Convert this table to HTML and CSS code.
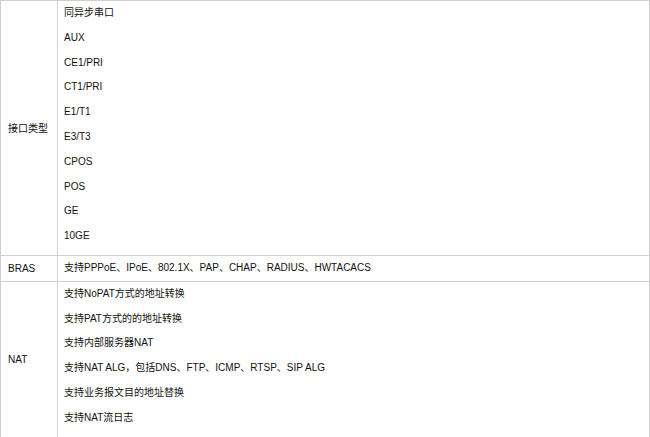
FILE: index.html
```html
<!DOCTYPE html>
<html lang="zh-CN">

<head>
  <meta charset="utf-8">
  <title>接口与特性</title>
  <link rel="stylesheet" href="styles.css">
</head>

<body>

  <table class="spec">
    <tr>
      <td class="spec-name">接口类型</td>
      <td class="spec-value">
        <div class="item">同异步串口</div>
        <div class="item">AUX</div>
        <div class="item">CE1/PRI</div>
        <div class="item">CT1/PRI</div>
        <div class="item">E1/T1</div>
        <div class="item">E3/T3</div>
        <div class="item">CPOS</div>
        <div class="item">POS</div>
        <div class="item">GE</div>
        <div class="item">10GE</div>
      </td>
    </tr>
    <tr>
      <td class="spec-name">BRAS</td>
      <td class="spec-value spec-single">
        <div class="item">支持PPPoE、IPoE、802.1X、PAP、CHAP、RADIUS、HWTACACS</div>
      </td>
    </tr>
    <tr>
      <td class="spec-name">NAT</td>
      <td class="spec-value">
        <div class="item">支持NoPAT方式的地址转换</div>
        <div class="item">支持PAT方式的的地址转换</div>
        <div class="item">支持内部服务器NAT</div>
        <div class="item">支持NAT ALG，包括DNS、FTP、ICMP、RTSP、SIP ALG</div>
        <div class="item">支持业务报文目的地址替换</div>
        <div class="item">支持NAT流日志</div>
      </td>
    </tr>
  </table>

</body>

</html>
```

FILE: styles.css
```css
body {
  margin: 0;
  background: #fff;
  font-family: "Liberation Sans", "Noto Sans CJK SC", sans-serif;
  font-size: 10px;
  color: #111;
}

.spec {
  width: 650px;
  border-collapse: collapse;
}

.spec td {
  border: 1px solid #cfcfcf;
  vertical-align: middle;
}

.spec-name {
  width: 49px;
  padding: 0 0 0 7px;
}

.spec-value {
  padding: 0 6px 6px 6px;
}

.spec-single {
  padding-bottom: 0;
}

.item {
  line-height: 24.8px;
  white-space: nowrap;
}
```
